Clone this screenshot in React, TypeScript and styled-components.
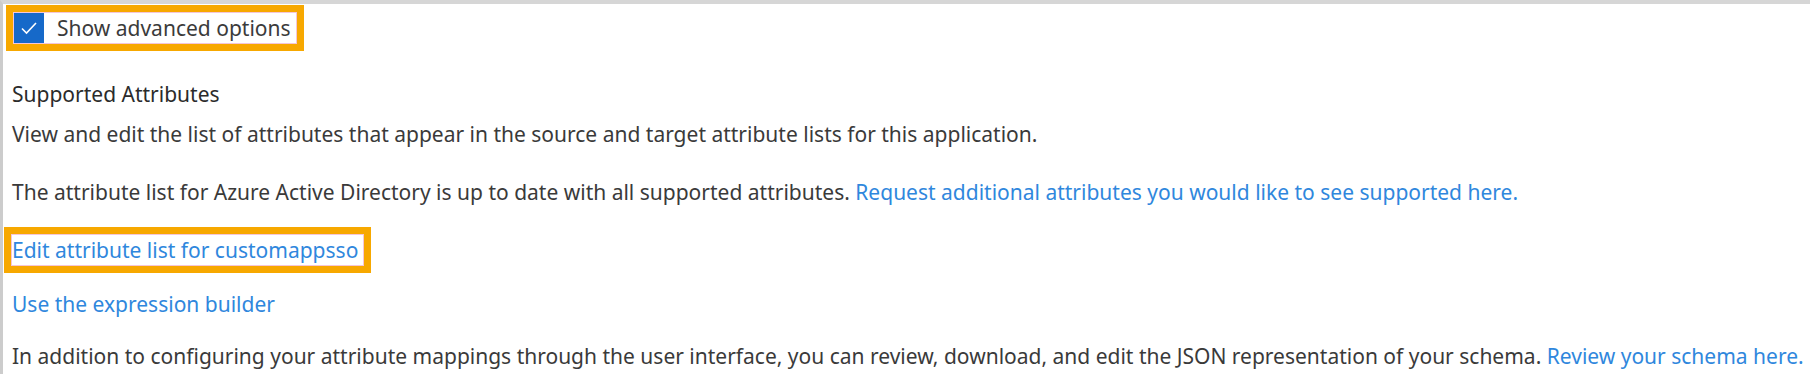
import React from "react";
import styled, { createGlobalStyle } from "styled-components";

const Global = createGlobalStyle`
  html, body { margin: 0; padding: 0; background: #ffffff; }
  body { font-family: "Segoe UI", "Noto Sans", "Open Sans", sans-serif; }
`;

const Frame = styled.div`
  width: 1810px;
  height: 374px;
  box-sizing: border-box;
  border-top: 4px solid #d6d6d6;
  border-left: 3px solid #cccccc;
  overflow: hidden;
  display: flex;
  flex-direction: column;
  align-items: flex-start;
  font-size: 21px;
  line-height: 28px;
  color: #3a3a3a;
  padding-left: 9px;
`;

const Highlight = styled.div<{ $left: number; $top: number }>`
  display: inline-flex;
  align-items: center;
  box-sizing: border-box;
  height: 46px;
  border: 7px solid #f7a800;
  margin-left: ${(p) => p.$left}px;
  margin-top: ${(p) => p.$top}px;
  background: #ffffff;
`;

const Inner = styled.div`
  display: flex;
  align-items: center;
  gap: 13px;
  height: 32px;
  box-sizing: border-box;
  border: 1px solid #f4c6d8;
  padding-right: 5px;
`;

const Box = styled.span`
  width: 30px;
  height: 30px;
  background: #1669c9;
  display: inline-flex;
  align-items: center;
  justify-content: center;
`;

const Label = styled.span`
  color: #3b3b3b;
`;

const Heading = styled.div`
  margin-top: 29px;
  color: #2b2b2b;
`;

const Para = styled.p<{ $top: number }>`
  margin: ${(p) => p.$top}px 0 0;
  white-space: nowrap;
`;

const Link = styled.a`
  color: #2f87dd;
  text-decoration: none;
  cursor: pointer;
`;

export default function App() {
  return (
    <>
      <Global />
      <Frame>
        <Highlight $left={-6} $top={1}>
          <Inner>
            <Box>
              <svg width="18" height="14" viewBox="0 0 18 14">
                <path d="M2 7.5 L6.5 12 L16 2" stroke="#ffffff" strokeWidth="1.6" fill="none" />
              </svg>
            </Box>
            <Label>Show advanced options</Label>
          </Inner>
        </Highlight>
        <Heading>Supported Attributes</Heading>
        <Para $top={12}>
          View and edit the list of attributes that appear in the source and target attribute lists for this application.
        </Para>
        <Para $top={30}>
          The attribute list for Azure Active Directory is up to date with all supported attributes.{" "}
          <Link>Request additional attributes you would like to see supported here.</Link>
        </Para>
        <Highlight $left={-8} $top={21}>
          <Inner>
            <Link>Edit attribute list for customappsso</Link>
          </Inner>
        </Highlight>
        <Para $top={17}>
          <Link>Use the expression builder</Link>
        </Para>
        <Para $top={24}>
          In addition to configuring your attribute mappings through the user interface, you can review, download, and edit the JSON representation of your schema.{" "}
          <Link>Review your schema here.</Link>
        </Para>
      </Frame>
    </>
  );
}
